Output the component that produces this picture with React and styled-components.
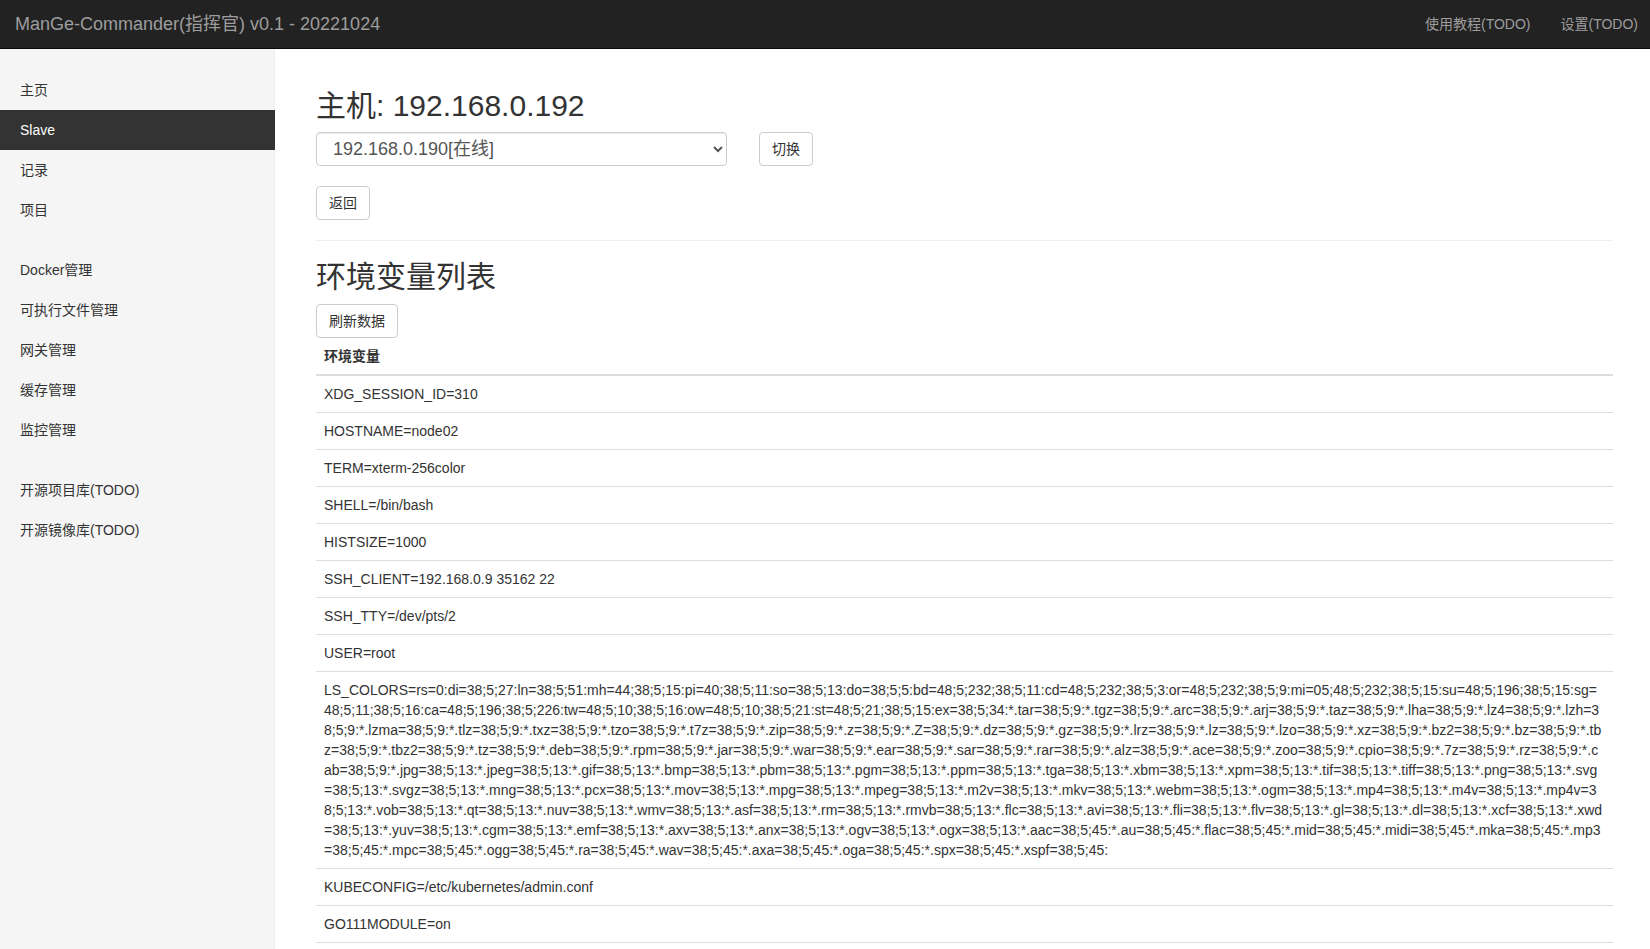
import { useState } from "react";
import styled, { createGlobalStyle } from "styled-components";

const GlobalStyle = createGlobalStyle`
  * { box-sizing: border-box; }
  body {
    margin: 0;
    font-family: "Liberation Sans", "Noto Sans CJK SC", sans-serif;
    font-size: 14px;
    line-height: 20px;
    color: #333;
    background: #fff;
  }
`;

const Navbar = styled.div`
  height: 49px;
  background: #222;
  border-bottom: 1px solid #080808;
  display: flex;
  align-items: center;
  justify-content: space-between;
  padding: 0 0 0 15px;
`;

const Brand = styled.a`
  font-size: 18px;
  color: #9d9d9d;
  text-decoration: none;
  line-height: 20px;
`;

const NavLinks = styled.div`
  display: flex;
  padding-right: 12px;
`;

const NavLink = styled.a`
  color: #9d9d9d;
  font-size: 14px;
  padding: 0 15px;
  text-decoration: none;
  &:last-child { padding-right: 0; }
`;

const Layout = styled.div`
  display: grid;
  grid-template-columns: 275px 1fr;
  min-height: calc(100vh - 49px);
`;

const Sidebar = styled.div`
  background: #f5f5f5;
  border-right: 1px solid #eee;
  padding-top: 21px;
`;

const SideGroup = styled.ul`
  list-style: none;
  margin: 0 0 20px;
  padding: 0;
`;

const SideItem = styled.li`
  padding: 10px 20px;
  line-height: 20px;
  color: ${(p) => (p.$active ? "#fff" : "#333")};
  background: ${(p) => (p.$active ? "#333" : "transparent")};
  margin-right: -1px;
  cursor: pointer;
`;

const Main = styled.div`
  padding: 20px 37.5px 20px 41px;
  min-width: 0;
`;

const Title = styled.h1`
  font-size: 30px;
  font-weight: 400;
  line-height: 33px;
  margin: 20px 0 10px;
`;

const SwitchRow = styled.div`
  display: flex;
  align-items: center;
  gap: 32px;
  margin-bottom: 20px;
`;

const HostSelect = styled.select`
  width: 411px;
  height: 34px;
  font-family: inherit;
  font-size: 18px;
  color: #555;
  padding: 0 12px;
  border: 1px solid #ccc;
  border-radius: 4px;
  background: #fff;
  box-shadow: inset 0 1px 1px rgba(0, 0, 0, 0.075);
`;

const Button = styled.button`
  font-family: inherit;
  font-size: 14px;
  line-height: 20px;
  height: 34px;
  padding: 6px 12px;
  color: #333;
  background: #fff;
  border: 1px solid #ccc;
  border-radius: 4px;
  cursor: pointer;
`;

const Divider = styled.hr`
  border: 0;
  border-top: 1px solid #eee;
  margin: 20px 0 19px;
`;

const SubTitle = styled.h2`
  font-size: 30px;
  font-weight: 400;
  line-height: 33px;
  margin: 0 0 11px;
`;

const Table = styled.table`
  width: 100%;
  border-collapse: collapse;
`;

const Th = styled.th`
  text-align: left;
  padding: 8px;
  line-height: 20px;
  border-bottom: 2px solid #ddd;
`;

const Td = styled.td`
  padding: 8px;
  line-height: 20px;
  border-top: 1px solid #ddd;
  word-break: break-all;
`;

const LS_COLORS =
  "LS_COLORS=rs=0:di=38;5;27:ln=38;5;51:mh=44;38;5;15:pi=40;38;5;11:so=38;5;13:do=38;5;5:bd=48;5;232;38;5;11:cd=48;5;232;38;5;3:or=48;5;232;38;5;9:mi=05;48;5;232;38;5;15:su=48;5;196;38;5;15:sg=48;5;11;38;5;16:ca=48;5;196;38;5;226:tw=48;5;10;38;5;16:ow=48;5;10;38;5;21:st=48;5;21;38;5;15:ex=38;5;34:*.tar=38;5;9:*.tgz=38;5;9:*.arc=38;5;9:*.arj=38;5;9:*.taz=38;5;9:*.lha=38;5;9:*.lz4=38;5;9:*.lzh=38;5;9:*.lzma=38;5;9:*.tlz=38;5;9:*.txz=38;5;9:*.tzo=38;5;9:*.t7z=38;5;9:*.zip=38;5;9:*.z=38;5;9:*.Z=38;5;9:*.dz=38;5;9:*.gz=38;5;9:*.lrz=38;5;9:*.lz=38;5;9:*.lzo=38;5;9:*.xz=38;5;9:*.bz2=38;5;9:*.bz=38;5;9:*.tbz=38;5;9:*.tbz2=38;5;9:*.tz=38;5;9:*.deb=38;5;9:*.rpm=38;5;9:*.jar=38;5;9:*.war=38;5;9:*.ear=38;5;9:*.sar=38;5;9:*.rar=38;5;9:*.alz=38;5;9:*.ace=38;5;9:*.zoo=38;5;9:*.cpio=38;5;9:*.7z=38;5;9:*.rz=38;5;9:*.cab=38;5;9:*.jpg=38;5;13:*.jpeg=38;5;13:*.gif=38;5;13:*.bmp=38;5;13:*.pbm=38;5;13:*.pgm=38;5;13:*.ppm=38;5;13:*.tga=38;5;13:*.xbm=38;5;13:*.xpm=38;5;13:*.tif=38;5;13:*.tiff=38;5;13:*.png=38;5;13:*.svg=38;5;13:*.svgz=38;5;13:*.mng=38;5;13:*.pcx=38;5;13:*.mov=38;5;13:*.mpg=38;5;13:*.mpeg=38;5;13:*.m2v=38;5;13:*.mkv=38;5;13:*.webm=38;5;13:*.ogm=38;5;13:*.mp4=38;5;13:*.m4v=38;5;13:*.mp4v=38;5;13:*.vob=38;5;13:*.qt=38;5;13:*.nuv=38;5;13:*.wmv=38;5;13:*.asf=38;5;13:*.rm=38;5;13:*.rmvb=38;5;13:*.flc=38;5;13:*.avi=38;5;13:*.fli=38;5;13:*.flv=38;5;13:*.gl=38;5;13:*.dl=38;5;13:*.xcf=38;5;13:*.xwd=38;5;13:*.yuv=38;5;13:*.cgm=38;5;13:*.emf=38;5;13:*.axv=38;5;13:*.anx=38;5;13:*.ogv=38;5;13:*.ogx=38;5;13:*.aac=38;5;45:*.au=38;5;45:*.flac=38;5;45:*.mid=38;5;45:*.midi=38;5;45:*.mka=38;5;45:*.mp3=38;5;45:*.mpc=38;5;45:*.ogg=38;5;45:*.ra=38;5;45:*.wav=38;5;45:*.axa=38;5;45:*.oga=38;5;45:*.spx=38;5;45:*.xspf=38;5;45:";

const envList = [
  "XDG_SESSION_ID=310",
  "HOSTNAME=node02",
  "TERM=xterm-256color",
  "SHELL=/bin/bash",
  "HISTSIZE=1000",
  "SSH_CLIENT=192.168.0.9 35162 22",
  "SSH_TTY=/dev/pts/2",
  "USER=root",
  LS_COLORS,
  "KUBECONFIG=/etc/kubernetes/admin.conf",
  "GO111MODULE=on",
  "MAIL=/var/spool/mail/root",
  "PATH=/usr/local/sbin:/usr/local/bin:/usr/sbin:/usr/bin:/root/bin",
  "PWD=/root",
  "LANG=en_US.UTF-8",
  "HOME=/root",
];

const menuGroups = [
  ["主页", "Slave", "记录", "项目"],
  ["Docker管理", "可执行文件管理", "网关管理", "缓存管理", "监控管理"],
  ["开源项目库(TODO)", "开源镜像库(TODO)"],
];

export default function App() {
  const [host, setHost] = useState("192.168.0.190");

  return (
    <>
      <GlobalStyle />
      <Navbar>
        <Brand href="#">ManGe-Commander(指挥官) v0.1 - 20221024</Brand>
        <NavLinks>
          <NavLink href="#">使用教程(TODO)</NavLink>
          <NavLink href="#">设置(TODO)</NavLink>
        </NavLinks>
      </Navbar>
      <Layout>
        <Sidebar>
          {menuGroups.map((group, i) => (
            <SideGroup key={i}>
              {group.map((item) => (
                <SideItem key={item} $active={item === "Slave"}>
                  {item}
                </SideItem>
              ))}
            </SideGroup>
          ))}
        </Sidebar>
        <Main>
          <Title>主机: 192.168.0.192</Title>
          <SwitchRow>
            <HostSelect value={host} onChange={(e) => setHost(e.target.value)}>
              <option value="192.168.0.190">192.168.0.190[在线]</option>
              <option value="192.168.0.191">192.168.0.191[在线]</option>
              <option value="192.168.0.192">192.168.0.192[在线]</option>
            </HostSelect>
            <Button>切换</Button>
          </SwitchRow>
          <Button>返回</Button>
          <Divider />
          <SubTitle>环境变量列表</SubTitle>
          <Button>刷新数据</Button>
          <Table>
            <thead>
              <tr>
                <Th>环境变量</Th>
              </tr>
            </thead>
            <tbody>
              {envList.map((env, i) => (
                <tr key={i}>
                  <Td>{env}</Td>
                </tr>
              ))}
            </tbody>
          </Table>
        </Main>
      </Layout>
    </>
  );
}
